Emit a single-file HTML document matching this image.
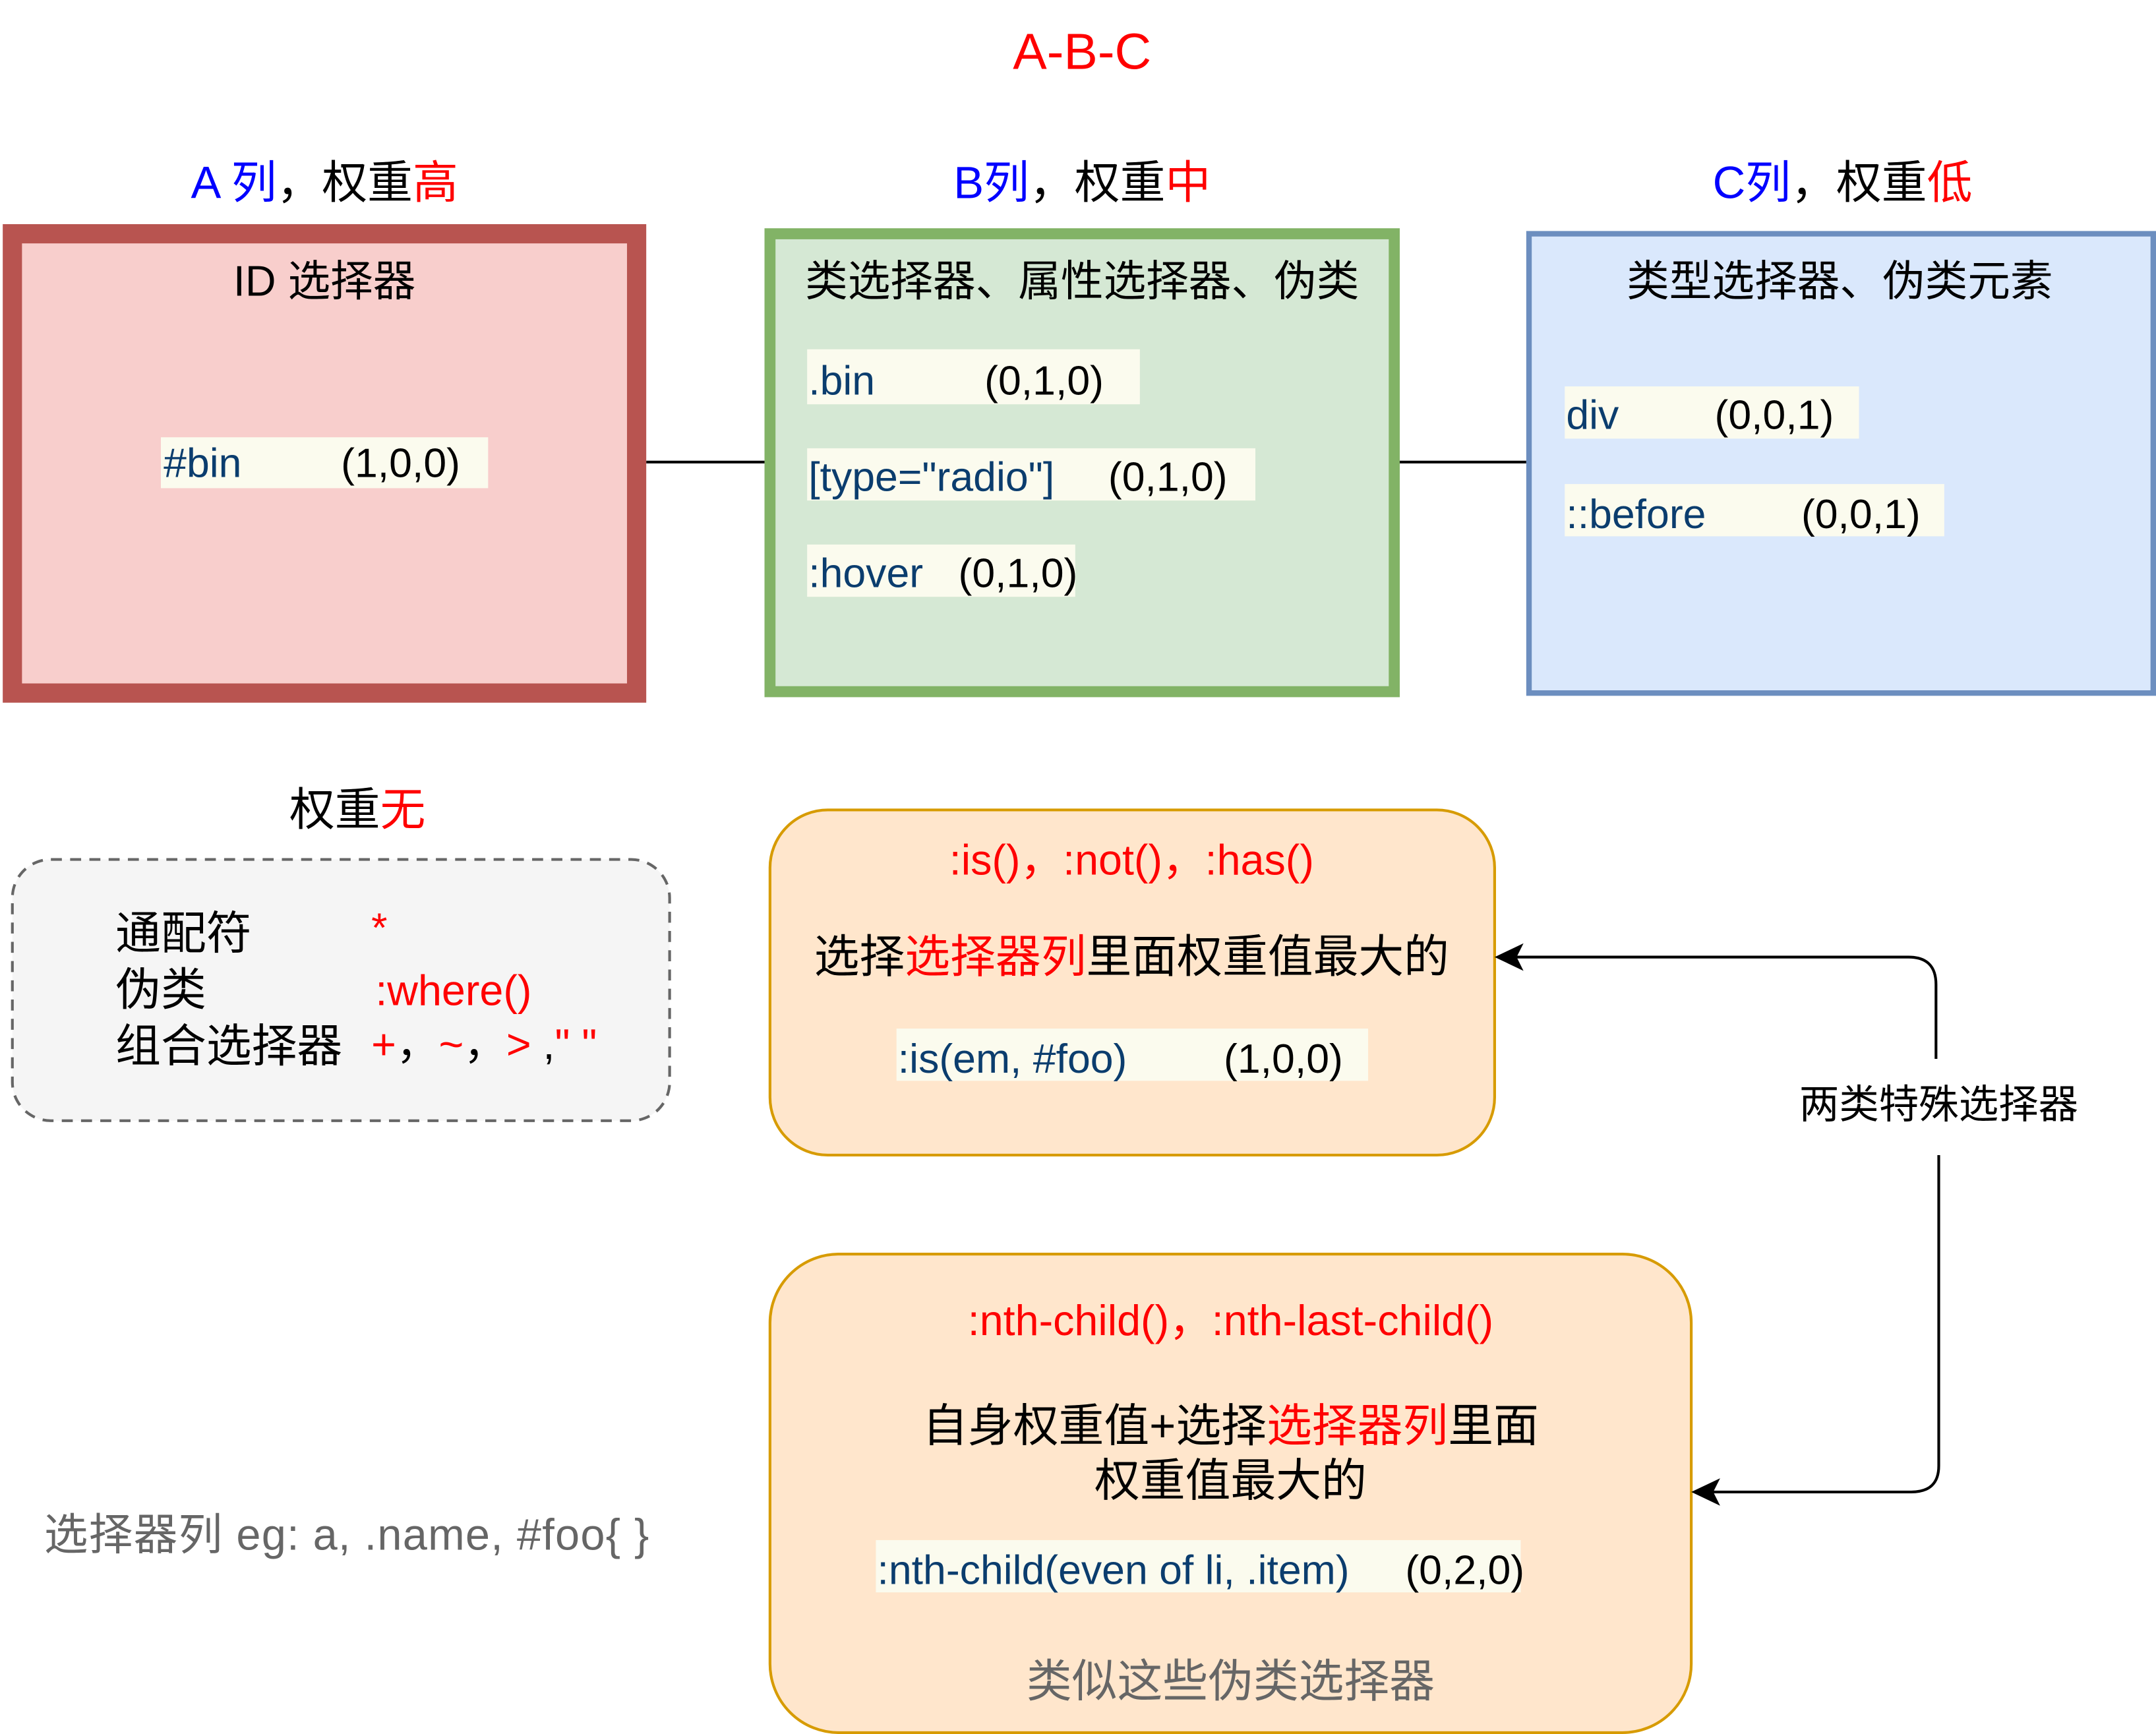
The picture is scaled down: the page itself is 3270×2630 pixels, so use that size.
<!DOCTYPE html>
<html><head><meta charset="utf-8"><style>
html,body{margin:0;padding:0;background:#fff;}
svg{display:block;}
text{font-family:"Liberation Sans","Noto Sans CJK SC",sans-serif;}
.v{font-family:"Liberation Sans",sans-serif;}
</style></head><body>
<svg width="3270" height="2630" viewBox="0 0 1568 1261" preserveAspectRatio="none" xmlns="http://www.w3.org/2000/svg" xml:space="preserve">
<rect width="1568" height="1261" fill="#fff"/>
<text x="787" y="50" font-size="37" fill="#ff0000" text-anchor="middle">A-B-C</text>
<text x="236" y="144" font-size="33" text-anchor="middle"><tspan fill="#0000ff">A 列</tspan><tspan fill="#000">，权重</tspan><tspan fill="#ff0000">高</tspan></text>
<text x="787" y="144" font-size="33" text-anchor="middle"><tspan fill="#0000ff">B列</tspan><tspan fill="#000">，权重</tspan><tspan fill="#ff0000">中</tspan></text>
<text x="1340" y="144" font-size="33" text-anchor="middle"><tspan fill="#0000ff">C列</tspan><tspan fill="#000">，权重</tspan><tspan fill="#ff0000">低</tspan></text>

<line x1="470" y1="336" x2="556" y2="336" stroke="#000" stroke-width="2"/>
<line x1="1018" y1="336" x2="1110" y2="336" stroke="#000" stroke-width="2"/>

<rect x="9" y="170" width="454" height="334" fill="#f8cecc" stroke="#b85450" stroke-width="14"/>
<rect x="560" y="170" width="454" height="333" fill="#d5e8d4" stroke="#82b366" stroke-width="8"/>
<rect x="1112" y="170" width="454" height="334" fill="#dae8fc" stroke="#6c8ebf" stroke-width="4"/>

<text x="236" y="215" font-size="31" text-anchor="middle" fill="#000">ID 选择器</text>
<rect x="117" y="318" width="238" height="37" fill="#fbfbee"/>
<text x="119" y="347" font-size="30" fill="#0b3d6e">#bin</text>
<text x="248" y="347" font-size="30" fill="#000">(1,0,0)</text>

<text x="787" y="215" font-size="31" text-anchor="middle" fill="#000">类选择器、属性选择器、伪类</text>
<rect x="587" y="254" width="242" height="40" fill="#fbfbee"/>
<text x="588" y="287" font-size="30" fill="#0b3d6e">.bin</text>
<text x="716" y="287" font-size="30" fill="#000">(0,1,0)</text>
<rect x="587" y="326" width="326" height="38" fill="#fbfbee"/>
<text x="588" y="357" font-size="30" fill="#0b3d6e">[type="radio"]</text>
<text x="806" y="357" font-size="30" fill="#000">(0,1,0)</text>
<rect x="587" y="396" width="195" height="38" fill="#fbfbee"/>
<text x="588" y="427" font-size="30" fill="#0b3d6e">:hover</text>
<text x="697" y="427" font-size="30" fill="#000">(0,1,0)</text>

<text x="1338" y="215" font-size="31" text-anchor="middle" fill="#000">类型选择器、伪类元素</text>
<rect x="1138" y="281" width="214" height="38" fill="#fbfbee"/>
<text x="1139" y="312" font-size="30" fill="#0b3d6e">div</text>
<text x="1247" y="312" font-size="30" fill="#000">(0,0,1)</text>
<rect x="1138" y="352" width="276" height="38" fill="#fbfbee"/>
<text x="1139" y="384" font-size="30" fill="#0b3d6e">::before</text>
<text x="1310" y="384" font-size="30" fill="#000">(0,0,1)</text>

<text x="260" y="600" font-size="33" text-anchor="middle"><tspan fill="#000">权重</tspan><tspan fill="#ff0000">无</tspan></text>
<rect x="9" y="625" width="478" height="190" rx="28" fill="#f5f5f5" stroke="#666" stroke-width="2" stroke-dasharray="8,6"/>
<text x="84" y="690" font-size="33" fill="#000">通配符</text>
<text x="270" y="685" font-size="30" fill="#ff0000">*</text>
<text x="84" y="731" font-size="33" fill="#000">伪类</text>
<text x="273" y="731" font-size="31" fill="#ff0000">:where()</text>
<text x="84" y="772" font-size="33" fill="#000">组合选择器</text>
<text x="270" y="770" font-size="31"><tspan fill="#ff0000">+</tspan><tspan fill="#000">，</tspan><tspan fill="#ff0000">~</tspan><tspan fill="#000">，</tspan><tspan fill="#ff0000">&gt;</tspan><tspan fill="#000"> ,</tspan><tspan fill="#ff0000">" "</tspan></text>

<rect x="560" y="589" width="527" height="251" rx="42" fill="#ffe6cc" stroke="#d79b00" stroke-width="2"/>
<text x="823" y="636" font-size="31" text-anchor="middle" fill="#ff0000">:is()，:not()，:has()</text>
<text x="823" y="707" font-size="33" text-anchor="middle"><tspan fill="#000">选择</tspan><tspan fill="#ff0000">选择器列</tspan><tspan fill="#000">里面权重值最大的</tspan></text>
<rect x="652" y="748" width="343" height="38" fill="#fbfbee"/>
<text x="653" y="780" font-size="30" fill="#0b3d6e">:is(em, #foo)</text>
<text x="890" y="780" font-size="30" fill="#000">(1,0,0)</text>

<rect x="560" y="912" width="670" height="348" rx="50" fill="#ffe6cc" stroke="#d79b00" stroke-width="2"/>
<text x="895" y="971" font-size="31" text-anchor="middle" fill="#ff0000">:nth-child()，:nth-last-child()</text>
<text x="895" y="1048" font-size="33" text-anchor="middle"><tspan fill="#000">自身权重值+选择</tspan><tspan fill="#ff0000">选择器列</tspan><tspan fill="#000">里面</tspan></text>
<text x="895" y="1088" font-size="33" text-anchor="middle" fill="#000">权重值最大的</text>
<rect x="637" y="1120" width="469" height="38" fill="#fbfbee"/>
<text x="638" y="1152" font-size="30" fill="#0b3d6e">:nth-child(even of li, .item)</text>
<text x="1022" y="1152" font-size="30" fill="#000">(0,2,0)</text>
<text x="895" y="1234" font-size="33" text-anchor="middle" fill="#666">类似这些伪类选择器</text>

<text x="32" y="1127" font-size="32" fill="#666" letter-spacing="0.6">选择器列 eg: a, .name, #foo{   }</text>

<path d="M1408,770 V716 Q1408,696 1388,696 H1100" fill="none" stroke="#000" stroke-width="2"/>
<path d="M1087,696 L1108,686 L1103,696 L1108,706 Z" fill="#000"/>
<path d="M1410,840 V1066 Q1410,1085 1390,1085 H1243" fill="none" stroke="#000" stroke-width="2"/>
<path d="M1230,1085 L1251,1075 L1246,1085 L1251,1095 Z" fill="#000"/>
<text x="1410" y="813" font-size="29" text-anchor="middle" fill="#000">两类特殊选择器</text>
</svg>
</body></html>
